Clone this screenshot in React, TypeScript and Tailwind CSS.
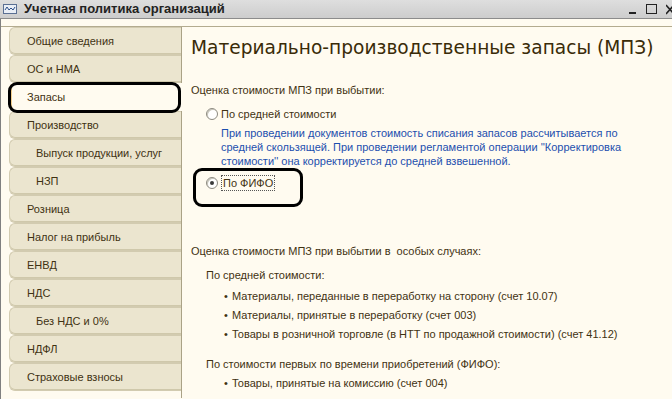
import React from "react";

const tabs = [
  { label: "Общие сведения", sub: false },
  { label: "ОС и НМА", sub: false },
  { label: "Запасы", sub: false, active: true },
  { label: "Производство", sub: false },
  { label: "Выпуск продукции, услуг", sub: true },
  { label: "НЗП", sub: true },
  { label: "Розница", sub: false },
  { label: "Налог на прибыль", sub: false },
  { label: "ЕНВД", sub: false },
  { label: "НДС", sub: false },
  { label: "Без НДС и 0%", sub: true },
  { label: "НДФЛ", sub: false },
  { label: "Страховые взносы", sub: false },
];

function Radio({ checked }: { checked?: boolean }) {
  return (
    <span className="relative w-[12px] h-[12px] rounded-full border border-[#8d8a80] bg-white shadow-[inset_1px_1px_0_#c9c6bb] flex items-center justify-center shrink-0">
      {checked && <span className="w-[4px] h-[4px] rounded-full bg-[#3a3a3a]" />}
    </span>
  );
}

export default function App() {
  return (
    <div className="relative w-[672px] h-[399px] overflow-hidden bg-[#fffbf0] text-[#3f3212] font-['Liberation_Sans',Arial,sans-serif] text-[11px]">
      {/* title bar */}
      <div className="h-[19px] flex items-center bg-gradient-to-b from-[#dedede] to-[#cdcdcd] border-b border-[#8c8c8c]">
        <svg width="14" height="10" viewBox="0 0 14 10" className="ml-[3px]">
          <rect x="0.5" y="0.5" width="13" height="9" fill="#e9eef6" stroke="#5a6f93" />
          <path d="M2 6 L4 3 L6 6 L8 4 L10 6 L12 3" stroke="#2d4f8a" fill="none" strokeWidth="1" />
        </svg>
        <span className="ml-[7px] font-bold text-[13px] text-[#222]">Учетная политика организаций</span>
        <div className="ml-auto flex items-end gap-[9px] -mr-[2px]">
          <svg width="9" height="12" viewBox="0 0 9 12">
            <rect x="1" y="9" width="7" height="2" fill="#222" />
          </svg>
          <svg width="11" height="12" viewBox="0 0 11 12">
            <rect x="0.5" y="1.5" width="10" height="9" fill="none" stroke="#222" />
          </svg>
          <svg width="8" height="12" viewBox="0 0 8 12">
            <path d="M0 2 L8 11 M8 2 L0 11" stroke="#222" strokeWidth="1.5" />
          </svg>
        </div>
      </div>

      <div className="border-l border-[#808080] h-[380px]">
        <div className="h-[8px] border-b border-[#b3ab8f]" />
        <div className="flex h-[371px]">
          {/* tabs */}
          <div className="w-[181px] pl-[8px] border-r border-[#aaa286] flex flex-col">
            {tabs.map((t) => (
              <div
                key={t.label}
                className={
                  t.active
                    ? "relative z-10 -mr-px h-[28px] flex items-center rounded-l-[6px] bg-[#fffbf0] border-l-[3px] border-[#f3cf8c]"
                    : "h-[28px] flex items-center rounded-l-[6px] bg-[#ebe5cf] border border-r-0 border-[#d2cbb0] shadow-[inset_0_-1px_0_#cfc8ab]"
                }
              >
                <span className={t.sub ? "pl-[26px]" : t.active ? "pl-[15px]" : "pl-[17px]"}>{t.label}</span>
              </div>
            ))}
          </div>

          {/* content */}
          <div className="flex-1 pl-[9px]">
            <div className="mt-[9px] h-[24px] leading-[24px] text-[18.6px] text-[#3a2b08] font-['DejaVu_Sans',Verdana,sans-serif] whitespace-nowrap">
              Материально-производственные запасы (МПЗ)
            </div>
            <div className="mt-[22px] h-[16px] leading-[16px]">Оценка стоимости МПЗ при выбытии:</div>
            <div className="mt-[8px] h-[16px] flex items-center pl-[15px] gap-[3px]">
              <Radio />
              <span className="leading-[16px]">По средней стоимости</span>
            </div>
            <div className="mt-[4px] pl-[30px] text-[#1d4fae] leading-[14px]">
              <div>При проведении документов стоимость списания запасов рассчитывается по</div>
              <div>средней скользящей. При проведении регламентой операции ''Корректировка</div>
              <div>стоимости'' она корректируется до средней взвешенной.</div>
            </div>
            <div className="mt-[7px] h-[16px] flex items-center pl-[15px] gap-[3px]">
              <Radio checked />
              <span className="leading-[14px] border border-dotted border-[#555] px-[1px]">По ФИФО</span>
            </div>
            <div className="mt-[52px] h-[16px] leading-[16px]">Оценка стоимости МПЗ при выбытии в&nbsp; особых случаях:</div>
            <div className="mt-[8px] h-[16px] leading-[16px] pl-[15px]">По средней стоимости:</div>
            <div className="mt-[4px] pl-[33px]">
              {[
                "Материалы, переданные в переработку на сторону (счет 10.07)",
                "Материалы, принятые в переработку (счет 003)",
                "Товары в розничной торговле (в НТТ по продажной стоимости) (счет 41.12)",
              ].map((s) => (
                <div key={s} className="h-[19px] leading-[19px] flex">
                  <span className="w-[8px]">•</span>
                  <span>{s}</span>
                </div>
              ))}
            </div>
            <div className="mt-[12px] h-[16px] leading-[16px] pl-[15px]">По стоимости первых по времени приобретений (ФИФО):</div>
            <div className="mt-[2px] pl-[33px] h-[19px] leading-[19px] flex">
              <span className="w-[8px]">•</span>
              <span>Товары, принятые на комиссию (счет 004)</span>
            </div>
          </div>
        </div>
      </div>

      {/* annotation marks */}
      <div className="absolute left-[8px] top-[82px] w-[173px] h-[31px] border-[3px] border-black rounded-[9px] pointer-events-none z-20" />
      <div className="absolute left-[193px] top-[168px] w-[110px] h-[39px] border-[3px] border-black rounded-[9px] pointer-events-none z-20" />
    </div>
  );
}
